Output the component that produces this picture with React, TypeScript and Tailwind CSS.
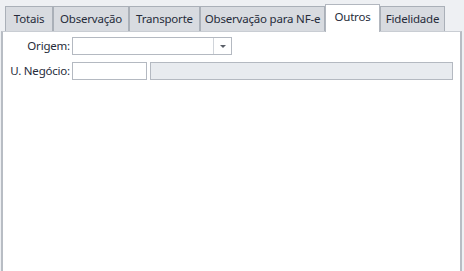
const tabs = [
  { label: "Totais", w: "w-[48px]" },
  { label: "Observação", w: "w-[76px]" },
  { label: "Transporte", w: "w-[71px]" },
  { label: "Observação para NF-e", w: "w-[125px]" },
  { label: "Outros", w: "w-[55px]" },
  { label: "Fidelidade", w: "w-[65px]" },
]

const App = () => {
  const active = "Outros"
  return (
    <div className="w-[464px] h-[271px] bg-[#eef0f3] flex flex-col overflow-hidden text-[11.5px] tracking-[-0.2px] text-[#262c3a] whitespace-nowrap" style={{ fontFamily: '"Segoe UI", "Noto Sans", sans-serif' }}>
      {/*Tabs*/}
      <div className="flex items-end pl-[5px] pt-[3px] h-[31px] shrink-0">
        {tabs.map((t) => (
          t.label === active ? (
            <div key={t.label} className={`${t.w} h-[28px] -mb-px relative z-10 pb-[4px] flex items-center justify-center bg-white border border-b-0 border-[#b2b7bf]`}>
              {t.label}
            </div>
          ) : (
            <div key={t.label} className={`${t.w} h-[25px] flex items-center justify-center bg-[#d8dbe0] border border-b-0 border-[#aab0b8]`}>
              {t.label}
            </div>
          )
        ))}
      </div>

      {/*Panel*/}
      <div className="flex-1 ml-px mr-[2px] bg-white border-l-2 border-r-2 border-t border-[#b8bdc4] border-t-[#c9cdd3] pt-[5px]">
        <div className="flex items-center h-[18px]">
          <label className="w-[67px] text-right">Origem:</label>
          <div className="ml-[2px] w-[160px] h-[18px] border border-[#b4b9c1] flex">
            <div className="flex-1" />
            <div className="w-[18px] border-l border-[#d0d4da] flex items-center justify-center">
              <div className="w-0 h-0 border-l-[3px] border-r-[3px] border-t-[3px] border-l-transparent border-r-transparent border-t-[#5a5f68]" />
            </div>
          </div>
        </div>
        <div className="flex items-center h-[18px] mt-[7px]">
          <label className="w-[67px] text-right">U. Negócio:</label>
          <div className="ml-[2px] w-[75px] h-[18px] border border-[#b4b9c1]" />
          <div className="ml-[3px] w-[303px] h-[18px] border border-[#b4b9c1] bg-[#e8ebef]" />
        </div>
      </div>
    </div>
  )
}

export default App
